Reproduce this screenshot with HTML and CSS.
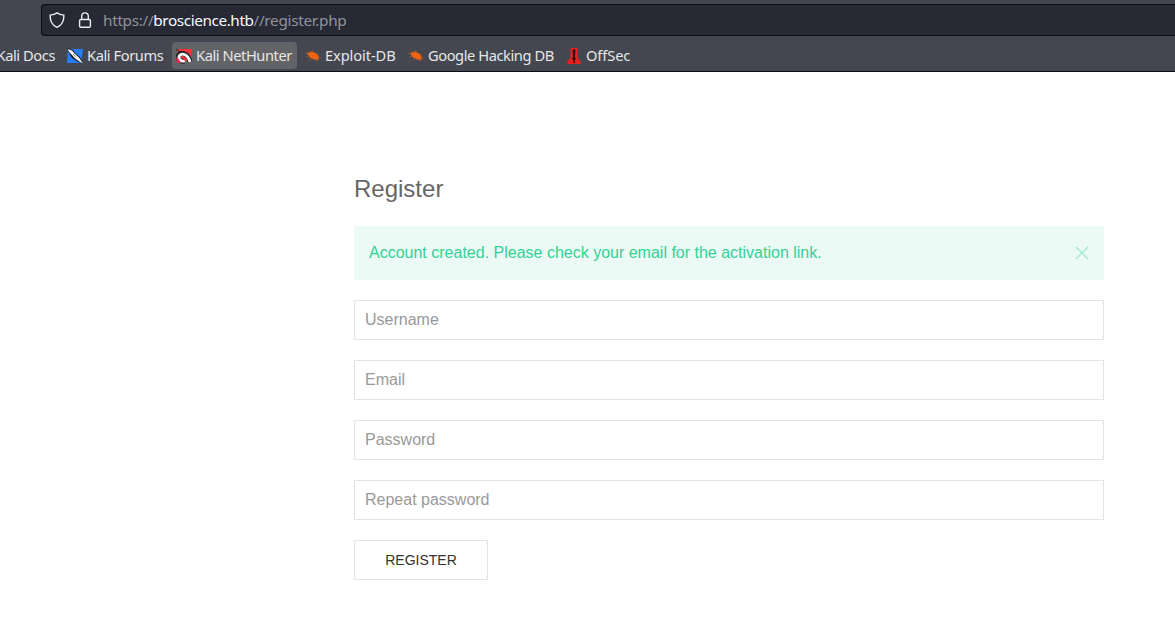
FILE: index.html
```html
<!DOCTYPE html>
<html lang="en">
<head>
<meta charset="utf-8">
<title>Register</title>
<link rel="stylesheet" href="styles.css">
</head>
<body>
<header class="chrome">
  <div class="urlbar">
    <svg class="shield" width="16" height="16" viewBox="0 0 16 16"><path d="M8 .8C6.2 2 3.8 2.8 1.2 3.1C.9 8.5 3 13 8 15.3C13 13 15.1 8.5 14.8 3.1C12.2 2.8 9.8 2 8 .8Z"/></svg>
    <svg class="lock" width="16" height="16" viewBox="0 0 16 16"><rect x="2.6" y="7.5" width="10.8" height="7.8" rx="1.3"/><path d="M4.7 7.5V4.2a3.3 3.3 0 0 1 6.6 0v3.3"/></svg>
    <span class="url">https://<b>broscience.htb</b>//register.php</span>
  </div>
  <nav class="bookmarks">
    <a class="bookmark docs"><span>Kali Docs</span></a>
    <a class="bookmark forums"><svg class="icon" width="16" height="16" viewBox="0 0 16 16"><path fill="#267df5" d="M1 1h15l-2 14H0z"/><path fill="#17181c" d="M0 0l6 2 3 4 4 3 3 6-5-1-6-4-3-5z"/><path fill="#f4f4f4" d="M.5 1l4.5 1.5 3.5 4 3.5 3 4 6-4.5-2.5-4-3-3-3.5-2-2z"/><path stroke="#555" stroke-width=".6" d="M6 6l2.5 2.5"/></svg><span>Kali Forums</span></a>
    <a class="bookmark nethunter"><svg class="icon" width="16" height="16" viewBox="0 0 16 16"><path fill="#f93338" d="M2 1h14l-2 13-5-2-8-2z"/><path fill="none" stroke="#26272b" stroke-width="5" d="M14 14C12 5 5 3.5 2.5 7.5c-1.5 3.5 2 6.5 6 5.5"/><path fill="none" stroke="#26272b" stroke-width="1" d="M0 1l5 4"/><path fill="none" stroke="#fff" stroke-width="2.8" d="M14 14C12 6 6 4.5 3.3 7.8c-1.5 3.5 2 6 5.5 5.2"/><path fill="#e5264d" d="M0 10l2 0 3 5H1z"/><path fill="#f93338" d="M6.5 9.2l4 1 .8 3-3-1z"/></svg><span>Kali NetHunter</span></a>
    <a class="bookmark exploit"><svg class="icon" width="16" height="16" viewBox="0 0 16 16"><path fill="#ee6412" d="M2 5.5l4-2 3.5 1 3 2 1.5 3-1 2.5-4-.5-4-2z"/><path fill="none" stroke="#ad572e" stroke-width=".7" d="M0 5l3 1M2 3l4 2M7 2l2 3M1 9l4-1M4 12l4-2M12 7l2 0M12 10l4 0M10 11l3 2"/></svg><span>Exploit-DB</span></a>
    <a class="bookmark ghdb"><svg class="icon" width="16" height="16" viewBox="0 0 16 16"><path fill="#ee6412" d="M2 5.5l4-2 3.5 1 3 2 1.5 3-1 2.5-4-.5-4-2z"/><path fill="none" stroke="#ad572e" stroke-width=".7" d="M0 5l3 1M2 3l4 2M7 2l2 3M1 9l4-1M4 12l4-2M12 7l2 0M12 10l4 0M10 11l3 2"/></svg><span>Google Hacking DB</span></a>
    <a class="bookmark offsec"><svg class="icon" width="16" height="16" viewBox="0 0 16 16"><path fill="#e91f20" d="M4.5 0h7v9.5l3 4v2.5h-13v-2.5l3-4z"/><path fill="#310c10" d="M6.5 2l1.5-1 1.5 1-.6 7 1.3 2-1.5 1v3H7.3V12l-1.5-1 1.3-2z"/></svg><span>OffSec</span></a>
  </nav>
</header>
<main class="content">
  <h1 class="title">Register</h1>
  <div class="alert">
    <p class="message">Account created. Please check your email for the activation link.</p>
    <svg class="close" width="14" height="14" viewBox="0 0 14 14"><path d="M1 1L13 13M13 1L1 13"/></svg>
  </div>
  <form class="form">
    <input class="field" type="text" placeholder="Username">
    <input class="field" type="text" placeholder="Email">
    <input class="field" type="password" placeholder="Password">
    <input class="field" type="password" placeholder="Repeat password">
    <button class="submit" type="button">Register</button>
  </form>
</main>
</body>
</html>
```
FILE: styles.css
```css
* { box-sizing: border-box; }
body {
  margin: 0;
  background: #fff;
  font: 16px/24px "Liberation Sans", Arial, sans-serif;
  overflow: hidden;
}
.chrome {
  height: 72px;
  padding-top: 4px;
  background: #44474f;
  border-bottom: 1px solid #0c0c13;
  font-family: "Noto Sans", sans-serif;
  overflow: hidden;
}
.urlbar {
  display: flex;
  align-items: center;
  height: 32px;
  margin-left: 41px;
  padding-left: 7px;
  background: #272935;
  border: 1px solid #0e0f15;
  border-right: 0;
  border-radius: 4px 0 0 4px;
}
.shield, .lock { fill: none; stroke: #ededf0; stroke-width: 1.4; }
.lock { margin-left: 12px; }
.url {
  margin-left: 10px;
  font-size: 15.3px;
  letter-spacing: -.3px;
  color: #92939a;
  white-space: pre;
}
.url b { font-weight: 400; letter-spacing: -.4px; color: #fbfbfe; }
.bookmarks {
  display: flex;
  align-items: center;
  gap: 4px;
  height: 27px;
  margin-top: 6px;
}
.bookmark {
  display: flex;
  align-items: center;
  flex: none;
  gap: 4px;
  height: 27px;
  padding: 0 4px;
  border-radius: 4px;
  font-size: 14.67px;
  line-height: 23px;
  letter-spacing: -.43px;
  color: #e6e6e8;
  white-space: nowrap;
}
.icon { flex: none; }
.docs { width: 59px; justify-content: flex-end; }
.forums { width: 105px; }
.nethunter { width: 125px; background: #626367; }
.exploit { width: 99px; letter-spacing: -.1px; }
.ghdb { width: 154px; }
.offsec { width: 72px; letter-spacing: -.1px; }
.content { width: 750px; margin: 100px 0 0 354px; }
.title {
  margin: 0 0 21px;
  font-size: 24px;
  line-height: 33px;
  font-weight: 400;
  color: #666;
}
.alert {
  display: flex;
  align-items: center;
  justify-content: space-between;
  height: 54px;
  padding: 0 15px;
  background: #ebfaf5;
  color: #32d296;
}
.message { margin: 0; }
.close { fill: none; stroke: #32d296; stroke-width: 1.1; opacity: .45; }
.form {
  display: flex;
  flex-direction: column;
  align-items: flex-start;
  gap: 20px;
  margin-top: 20px;
}
.field {
  width: 100%;
  height: 40px;
  padding: 0 10px;
  border: 1px solid #e5e5e5;
  background: #fff;
  font: inherit;
}
.field::placeholder { color: #999; opacity: 1; }
.submit {
  width: 134px;
  height: 40px;
  padding: 0;
  border: 1px solid #e5e5e5;
  background: transparent;
  font: 14px/38px "Liberation Sans", Arial, sans-serif;
  color: #333;
  text-transform: uppercase;
}
```
